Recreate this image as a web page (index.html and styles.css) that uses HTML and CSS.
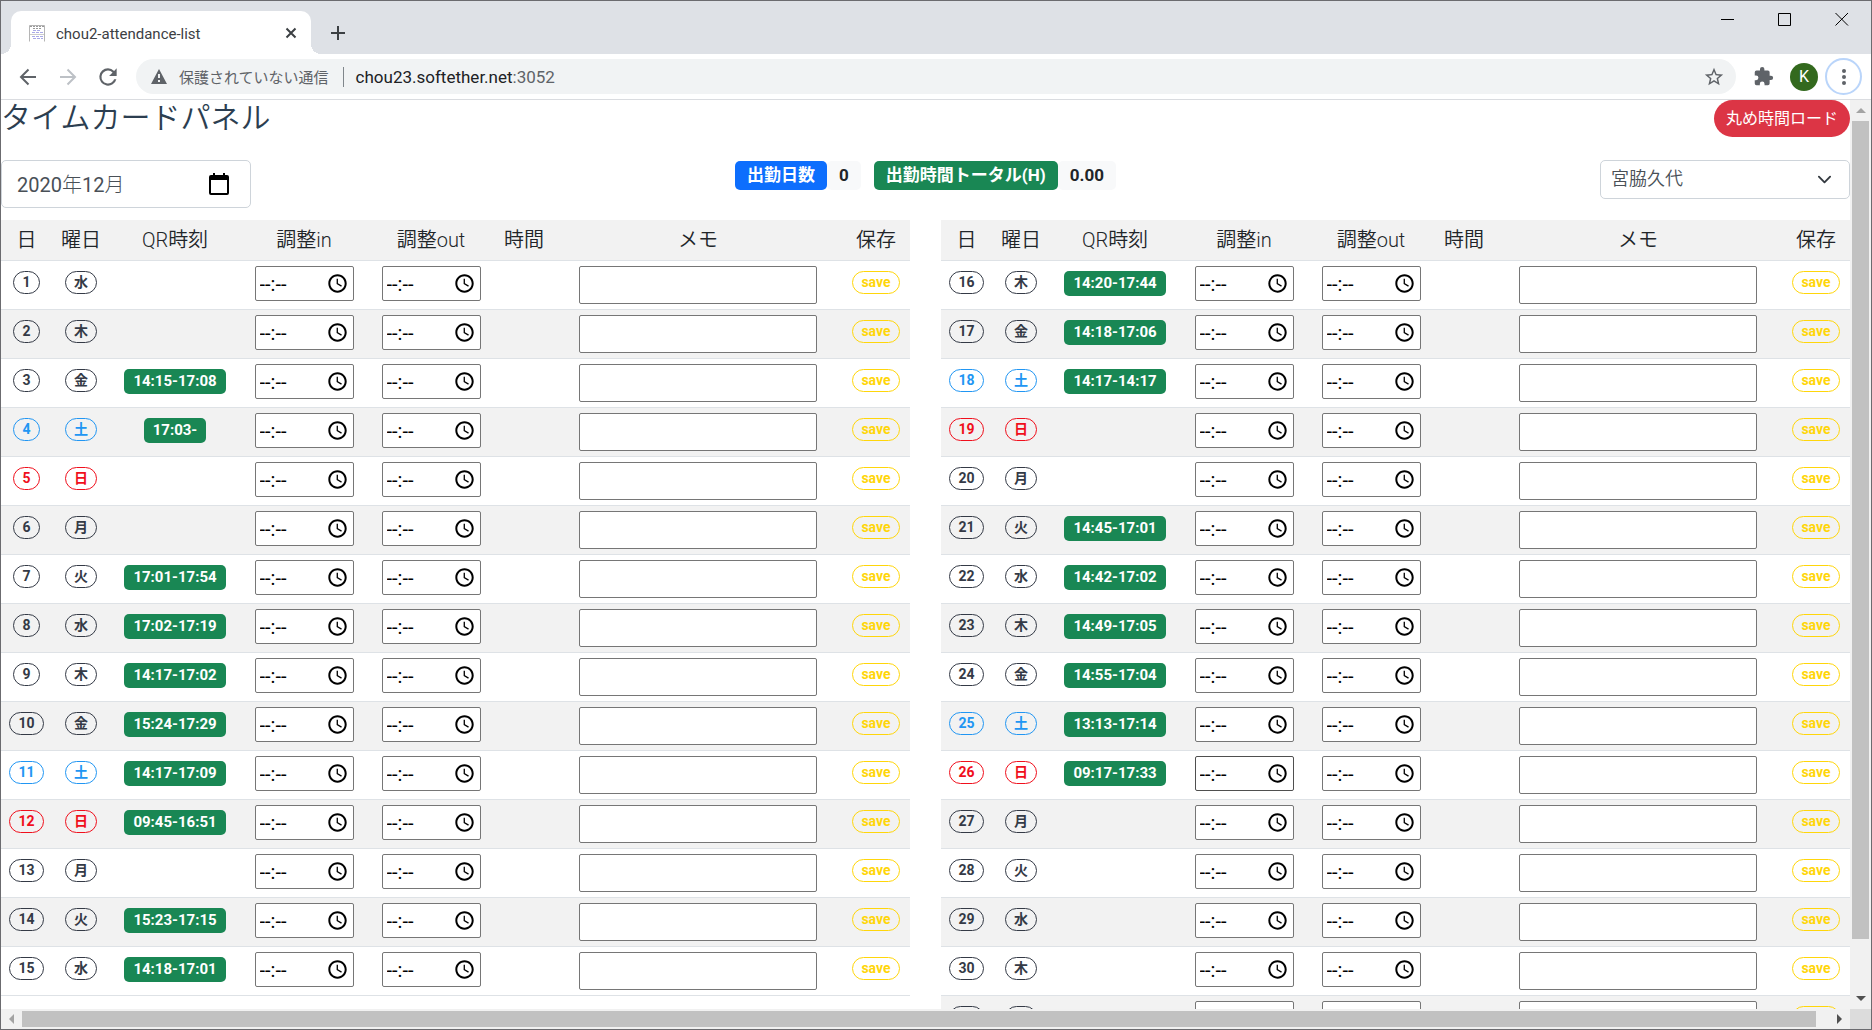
FILE: index.html
```html
<!DOCTYPE html>
<html lang="ja">
<head>
<meta charset="utf-8">
<title>chou2-attendance-list</title>
<meta name="viewport" content="width=device-width, initial-scale=1">
<link rel="stylesheet" href="styles.css">
</head>
<body>
<svg class="defs" aria-hidden="true">
  <symbol id="clock" viewBox="0 0 24 24"><path d="M12 1.500C6.200 1.500 1.500 6.200 1.500 12S6.200 22.500 12 22.500 22.500 17.800 22.500 12 17.800 1.500 12 1.500zm0 18.700c-4.500 0-8.200-3.700-8.200-8.200S7.500 3.800 12 3.800s8.200 3.700 8.200 8.200-3.700 8.200-8.200 8.200zM12.500 6.500H11v6l5.200 3.200.8-1.300-4.500-2.700z"/></symbol>
</svg>
<header class="browser">
  <div class="tabstrip">
    <div class="tab">
      <svg class="favicon" viewBox="0 0 18 18"><path fill="#fff" stroke="#b5b5b5" d="M1.500 17.500V1.500h15v16"/><path stroke="#999" stroke-dasharray="2 1" d="M2 2.500h14M5 4.500h9"/><path stroke="#a9a9e8" stroke-dasharray="3 1" d="M5 6.500h8M4 8.500h12M4 12.500h11M5 14.500h10"/><path stroke="#ccc" d="M2 10.500h14"/></svg>
      <span class="tab-title">chou2-attendance-list</span>
      <button class="icon-btn" aria-label="タブを閉じる"><svg width="12" height="12" viewBox="0 0 12 12"><path d="M1.500 1.500l9 9m0-9l-9 9" stroke="#3c4043" stroke-width="2"/></svg></button>
    </div>
    <button class="icon-btn new-tab" aria-label="新しいタブ"><svg width="16" height="16" viewBox="0 0 16 16"><path d="M8 1v14M1 8h14" stroke="#3c4043" stroke-width="2"/></svg></button>
    <div class="window-buttons">
      <button class="icon-btn" aria-label="最小化"><svg width="14" height="14" viewBox="0 0 14 14"><path d="M0 7.500h13" stroke="#000"/></svg></button>
      <button class="icon-btn" aria-label="最大化"><svg width="14" height="14" viewBox="0 0 14 14"><path d="M.5 1.500h12v12H.5z" stroke="#000" fill="none"/></svg></button>
      <button class="icon-btn" aria-label="閉じる"><svg width="14" height="14" viewBox="0 0 14 14"><path d="M.5 1l12.500 12.500M13 1L.5 13.500" stroke="#000"/></svg></button>
    </div>
  </div>
  <div class="toolbar">
    <button class="icon-btn nav" aria-label="戻る"><svg width="18" height="18" viewBox="0 0 18 18"><path d="M17 9H2m7.500-7.500L2 9l7.500 7.500" stroke="#5f6368" stroke-width="2" fill="none"/></svg></button>
    <button class="icon-btn nav" aria-label="進む"><svg width="18" height="18" viewBox="0 0 18 18"><path d="M1 9h15M8.500 1.500L16 9l-7.500 7.500" stroke="#bdc1c6" stroke-width="2" fill="none"/></svg></button>
    <button class="icon-btn nav" aria-label="再読み込み"><svg width="26" height="26" viewBox="0 0 24 24"><path fill="#5f6368" d="M17.650 6.350A7.960 7.960 0 0 0 12 4a8 8 0 1 0 7.730 10h-2.080A6 6 0 1 1 12 6c1.660 0 3.140.69 4.220 1.780L13 11h7V4z"/></svg></button>
    <div class="omnibox">
      <svg width="16" height="15" viewBox="0 0 16 15"><path fill="#5f6368" d="M8 0l8 15H0z"/><path stroke="#f1f3f4" stroke-width="2" d="M8 5v4m0 2v2"/></svg>
      <span class="insecure">保護されていない通信</span>
      <span class="divider"></span>
      <span class="url">chou23.softether.net<span class="port">:3052</span></span>
      <button class="icon-btn star" aria-label="ブックマーク"><svg width="22" height="22" viewBox="0 0 24 24"><path fill="#5f6368" d="M22 9.240l-7.190-.62L12 2 9.190 8.630 2 9.240l5.460 4.730L5.820 21 12 17.270 18.180 21l-1.630-7.030zM12 15.400l-3.760 2.270 1-4.280-3.320-2.880 4.380-.38L12 6.100l1.710 4.040 4.380.38-3.320 2.880 1 4.280z"/></svg></button>
    </div>
    <button class="icon-btn ext" aria-label="拡張機能"><svg width="21" height="21" viewBox="0 0 24 24"><path fill="#5f6368" d="M20.500 11H19V7a2 2 0 0 0-2-2h-4V3.500a2.500 2.500 0 0 0-5 0V5H4a2 2 0 0 0-2 2v3.800h1.500a2.700 2.700 0 0 1 0 5.400H2V20a2 2 0 0 0 2 2h3.800v-1.500a2.700 2.700 0 0 1 5.400 0V22H17a2 2 0 0 0 2-2v-4h1.500a2.500 2.500 0 0 0 0-5z"/></svg></button>
    <button class="avatar">K</button>
    <button class="menu" aria-label="メニュー"><svg width="6" height="18" viewBox="0 0 6 18"><g fill="#5f6368"><circle cx="3" cy="3" r="2"/><circle cx="3" cy="9" r="2"/><circle cx="3" cy="15" r="2"/></g></svg></button>
  </div>
</header>
<div class="viewport">
  <main class="page">
    <div class="title-row">
      <h1>タイムカードパネル</h1>
      <button class="load">丸め時間ロード</button>
    </div>
    <div class="filters">
      <label class="month">
        <input type="text" value="2020年12月" aria-label="年月">
        <svg width="20" height="22" viewBox="0 0 20 22"><path d="M4 0h2v2h8V0h2v2h2a2 2 0 0 1 2 2v16a2 2 0 0 1-2 2H2a2 2 0 0 1-2-2V4a2 2 0 0 1 2-2h2zM2 7v13h16V7z"/></svg>
      </label>
      <div class="totals">
        <span class="badge blue">出勤日数</span><span class="badge light">0</span>
        <span class="badge green second">出勤時間トータル(H)</span><span class="badge light">0.00</span>
      </div>
      <select class="person" aria-label="氏名"><option>宮脇久代</option></select>
    </div>
    <div class="tables">
      <table class="card" id="first"></table>
      <table class="card" id="second"></table>
    </div>
  </main>
  <div class="vbar"><span class="arrow up"></span><span class="thumb"></span><span class="arrow down"></span></div>
  <div class="hbar"><span class="arrow left"></span><span class="thumb"></span><span class="arrow right"></span></div>
  <div class="corner"></div>
</div>
<script src="app.js"></script>
</body>
</html>
```
FILE: styles.css
```css
* { box-sizing: border-box; }
body {
  margin: 0;
  height: 100vh;
  display: flex;
  flex-direction: column;
  overflow: hidden;
  border: 1px solid #6b6b6f;
  background: #fff;
  color: #212529;
  font-family: Roboto, "Noto Sans CJK JP", sans-serif;
}
button, input, select { font: inherit; color: inherit; }
button { cursor: pointer; }
.defs { display: none; }
.icon-btn {
  display: flex;
  align-items: center;
  justify-content: center;
  padding: 0;
  border: 0;
  background: none;
}
.favicon { fill: none; }

/* browser frame */
.tabstrip {
  display: flex;
  height: 53px;
  padding-left: 10px;
  background: #dee1e6;
}
.tab {
  position: relative;
  display: flex;
  align-items: center;
  width: 300px;
  margin-top: 10px;
  padding: 0 14px 0 17px;
  border-radius: 10px 10px 0 0;
  background: #fff;
}
.tab::before, .tab::after {
  content: "";
  position: absolute;
  bottom: 0;
  width: 10px;
  height: 10px;
}
.tab::before { right: 100%; background: radial-gradient(circle at 0 0, transparent 10px, #fff 10px); }
.tab::after { left: 100%; background: radial-gradient(circle at 100% 0, transparent 10px, #fff 10px); }
.favicon { width: 18px; height: 18px; margin-right: 10px; }
.tab-title { flex: 1; padding-top: 2px; font-size: 15px; color: #3c4043; }
.new-tab { width: 54px; padding-top: 10px; }
.window-buttons { display: flex; margin-left: auto; padding-right: 1px; height: 36px; }
.window-buttons .icon-btn { width: 57px; }
.toolbar {
  display: flex;
  align-items: center;
  height: 46px;
  padding: 0 9px 0 7px;
  border-bottom: 1px solid #dadce0;
}
.nav { width: 40px; }
.omnibox {
  flex: 1;
  display: flex;
  align-items: center;
  height: 35px;
  margin-left: 8px;
  padding: 0 11px 0 15px;
  border-radius: 18px;
  background: #f1f3f4;
  color: #5f6368;
}
.insecure { margin-left: 12px; font-size: 15px; }
.divider { width: 1px; height: 20px; margin: 0 12px 0 14px; background: #80868b; }
.url { font-size: 17px; color: #202124; }
.port { color: #5f6368; }
.star { margin-left: auto; }
.ext { width: 54px; }
.avatar {
  width: 28px;
  height: 28px;
  padding: 0;
  border: 0;
  border-radius: 50%;
  background: #33691e;
  color: #fff;
  font-size: 16px;
}
.menu {
  display: flex;
  align-items: center;
  justify-content: center;
  width: 37px;
  height: 37px;
  margin-left: 7px;
  padding: 0;
  border: 2px solid #bad5fa;
  border-radius: 50%;
  background: #fff;
}

/* scrolled area */
.viewport {
  flex: 1;
  min-height: 0;
  display: grid;
  grid-template-columns: minmax(0, 1fr) 21px;
  grid-template-rows: minmax(0, 1fr) 20px;
}
.page { overflow: hidden; }
.vbar, .hbar { display: flex; background: #f1f1f1; }
.vbar { flex-direction: column; padding: 0 2px; }
.hbar { padding: 2px 0; }
.corner { background: #dcdcdc; }
.thumb { background: #c1c1c1; }
.vbar .thumb { height: 90%; }
.hbar .thumb { width: 97%; }
.arrow { display: flex; align-items: center; justify-content: center; flex: 0 0 21px; }
.arrow::before { content: ""; border: 5px solid transparent; }
.up::before { border-top: 0; border-bottom-color: #a3a3a3; }
.down { margin-top: auto; }
.down::before { border-bottom: 0; border-top-color: #505050; }
.left::before { border-left: 0; border-right-color: #a3a3a3; }
.right { margin-left: auto; }
.right::before { border-right: 0; border-left-color: #505050; }

.title-row { display: flex; justify-content: space-between; height: 60px; }
h1 {
  margin: 0;
  font-family: Roboto, "Noto Sans CJK JP DemiLight", "Noto Sans CJK JP", sans-serif;
  font-size: 30px;
  font-weight: 350;
  line-height: 36px;
  color: #2c3e50;
}
.load {
  height: 37px;
  padding: 0 12px 4px;
  border: 0;
  border-radius: 19px;
  background: #dc3545;
  color: #fff;
  font-size: 16px;
}
.filters {
  display: grid;
  grid-template-columns: 250px 1fr 250px;
  align-items: start;
  height: 60px;
}
.month {
  display: flex;
  align-items: center;
  height: 48px;
  padding: 0 21px 0 15px;
  border: 1px solid #ced4da;
  border-radius: 5px;
}
.month input {
  flex: 1;
  min-width: 0;
  padding: 0 0 2px;
  border: 0;
  background: none;
  font-size: 20px;
  font-family: Roboto, "Noto Sans CJK JP Light", "Noto Sans CJK JP", sans-serif;
  color: #495057;
}
.totals { display: flex; justify-content: center; padding-top: 1px; }
.badge {
  padding: 0 12px;
  border-radius: 5px;
  font-size: 17px;
  font-weight: 700;
  line-height: 29px;
}
.blue { background: #0d6efd; color: #fff; }
.green { background: #198754; color: #fff; }
.light { background: #f8f9fa; }
.second { margin-left: 13px; }
.person {
  appearance: none;
  height: 39px;
  padding: 0 40px 2px 10px;
  border: 1px solid #ced4da;
  border-radius: 5px;
  background: #fff url("data:image/svg+xml,%3Csvg xmlns='http://www.w3.org/2000/svg' viewBox='0 0 16 16'%3E%3Cpath fill='none' stroke='%23343a40' stroke-linecap='round' stroke-linejoin='round' stroke-width='2' d='M2 5l6 6 6-6'/%3E%3C/svg%3E") no-repeat right 17px center / 15px;
  font-size: 18px;
  font-weight: 350;
  color: #495057;
}

/* time card tables */
.tables {
  display: grid;
  grid-template-columns: 1fr 1fr;
  align-items: start;
  gap: 31px;
}
.card {
  width: 100%;
  table-layout: fixed;
  border-collapse: separate;
  border-spacing: 0;
}
.c-day { width: 51px; }
.c-dow { width: 58px; }
.c-qr { width: 130px; }
.c-in { width: 128px; }
.c-out { width: 126px; }
.c-hours { width: 60px; }
.c-save { width: 68px; }
th, td { padding: 0; border-bottom: 1px solid #dee2e6; text-align: center; }
th {
  height: 41px;
  font-family: Roboto, "Noto Sans CJK JP DemiLight", "Noto Sans CJK JP", sans-serif;
  font-size: 20px;
  font-weight: 350;
  line-height: 24px;
}
thead th, tbody tr:nth-child(even) { background: #f2f2f2; }
td { height: 49px; padding-top: 5px; vertical-align: top; }
.chip, .save {
  display: inline-block;
  height: 23px;
  margin-top: 5px;
  padding: 0 8px;
  border: 1px solid #343a46;
  border-radius: 12px;
  background: none;
  color: #343a46;
  font-size: 14px;
  font-weight: 700;
  line-height: 21px;
  vertical-align: top;
}
.chip.sat { border-color: #2196f3; color: #2196f3; }
.chip.sun { border-color: #f00f1c; color: #f00f1c; }
.save { border-color: #ffd60a; color: #ffd60a; }
.qr {
  display: inline-block;
  margin-top: 5px;
  padding: 0 9px;
  border-radius: 5px;
  background: #198754;
  color: #fff;
  font-size: 15px;
  font-weight: 700;
  line-height: 25px;
  vertical-align: top;
}
.time {
  display: inline-flex;
  align-items: center;
  width: 99px;
  height: 35px;
  padding: 0 5px 0 4px;
  border: 1px solid #767676;
  border-radius: 2px;
  background: #fff;
}
.time input {
  flex: 1;
  min-width: 0;
  padding: 0;
  border: 0;
  background: none;
  font-size: 20px;
  line-height: 24px;
  color: #000;
}
.time svg { width: 21px; height: 21px; }
.time:hover, .time.active { border-color: #4f4f4f; }
.memo {
  width: 238px;
  height: 38px;
  border: 1px solid #767676;
  border-radius: 2px;
  background: #fff;
  vertical-align: top;
}
```
FILE: app.js
```js
const week = ['火', '水', '木', '金', '土', '日', '月'];
const stamps = {
  3: '14:15-17:08', 4: '17:03-', 7: '17:01-17:54', 8: '17:02-17:19',
  9: '14:17-17:02', 10: '15:24-17:29', 11: '14:17-17:09', 12: '09:45-16:51',
  14: '15:23-17:15', 15: '14:18-17:01', 16: '14:20-17:44', 17: '14:18-17:06',
  18: '14:17-14:17', 21: '14:45-17:01', 22: '14:42-17:02', 23: '14:49-17:05',
  24: '14:55-17:04', 25: '13:13-17:14', 26: '09:17-17:33'
};
const activeDay = 26;
const columns = [['day', '日'], ['dow', '曜日'], ['qr', 'QR時刻'], ['in', '調整in'],
  ['out', '調整out'], ['hours', '時間'], ['memo', 'メモ'], ['save', '保存']];

const time = (label, active) => `<label class="time${active ? ' active' : ''}"><input type="text" value="--:--" aria-label="${label}"><svg><use href="#clock"/></svg></label>`;

function row(day) {
  const dow = week[day % 7];
  const kind = dow === '土' ? ' sat' : dow === '日' ? ' sun' : '';
  return `<tr>
    <td><span class="chip${kind}">${day}</span></td>
    <td><span class="chip${kind}">${dow}</span></td>
    <td>${stamps[day] ? `<span class="qr">${stamps[day]}</span>` : ''}</td>
    <td>${time(day + '日 調整in', day === activeDay)}</td>
    <td>${time(day + '日 調整out')}</td>
    <td></td>
    <td><input class="memo" type="text" aria-label="${day}日 メモ"></td>
    <td><button class="save">save</button></td>
  </tr>`;
}

function fill(id, from, to) {
  const days = [];
  for (let d = from; d <= to; d++) days.push(row(d));
  const head = columns.map(([key, text]) => `<th class="c-${key}">${text}</th>`).join('');
  document.getElementById(id).innerHTML =
    `<thead><tr>${head}</tr></thead><tbody>${days.join('')}</tbody>`;
}

fill('first', 1, 15);
fill('second', 16, 31);
```
